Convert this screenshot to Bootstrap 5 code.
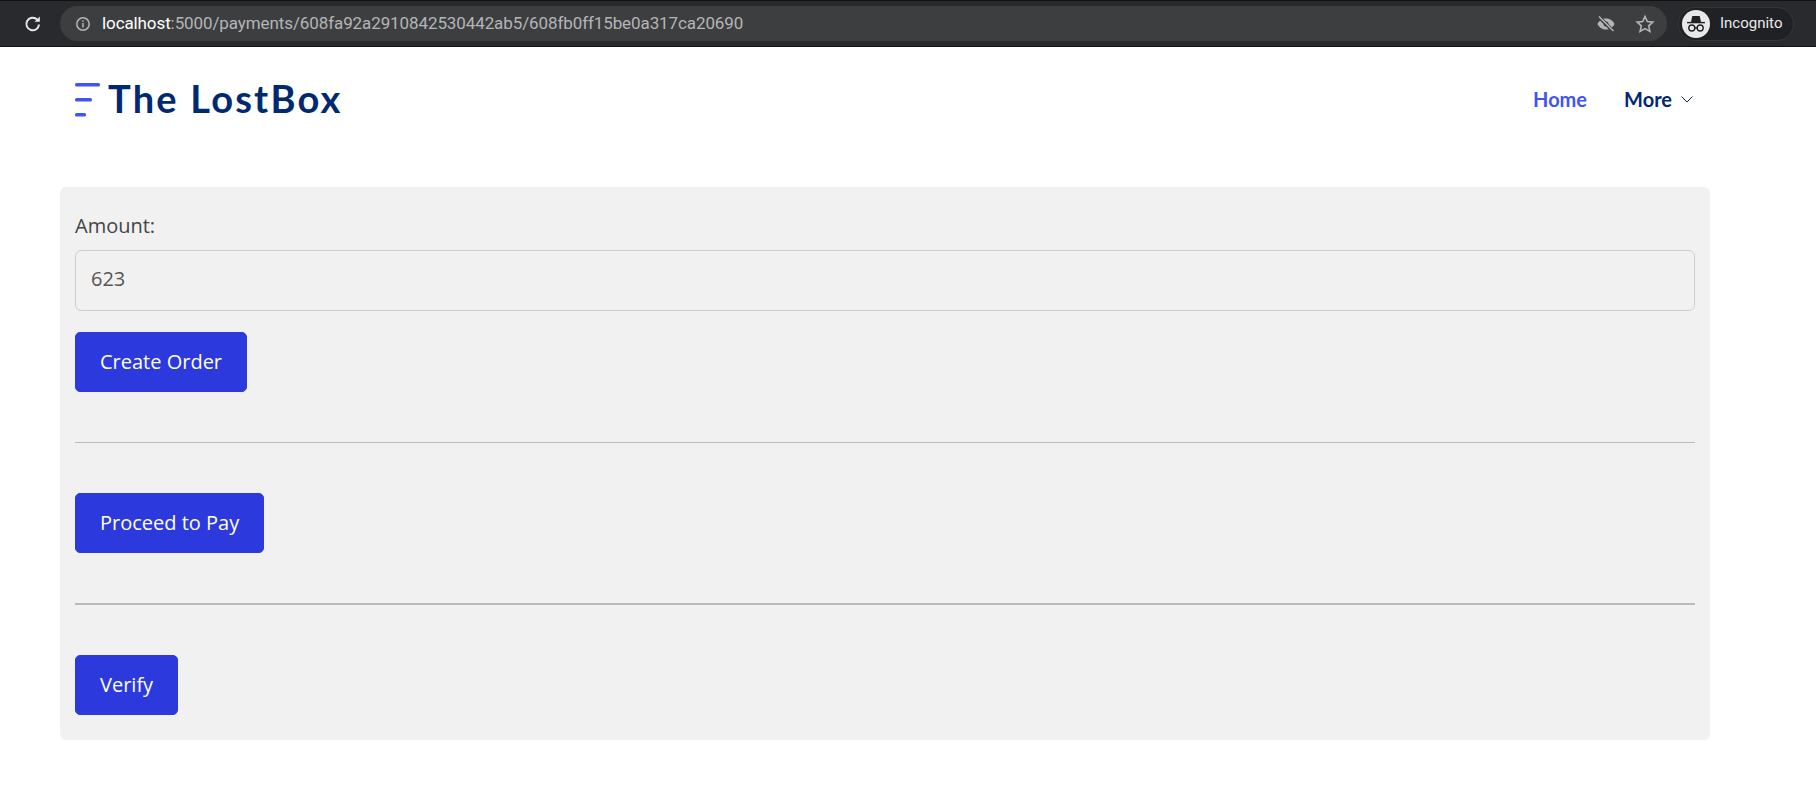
<!DOCTYPE html>
<html lang="en">
<head>
  <meta charset="UTF-8" />
  <title>The LostBox</title>
  <link href="https://cdn.jsdelivr.net/npm/bootstrap@5.3.3/dist/css/bootstrap.min.css" rel="stylesheet"/>
  <style>
    body {
      background: #fff;
      font-family: 'Open Sans', sans-serif;
      overflow: hidden;
    }

    .chrome-bar {
      height: 47px;
      background: #292a2d;
      border-top: 1px solid #111;
      border-bottom: 1px solid #111;
      padding-left: 23px;
    }

    .url-box {
      height: 35px;
      margin-left: 17px;
      width: 1607px;
      background: #3d3e40;
      border-radius: 18px;
      padding: 0 12px 0 15px;
      font-family: 'Roboto', sans-serif;
      font-size: 17px;
      letter-spacing: -0.1px;
      color: #b4b5b7;
    }

    .info-icon {
      margin-right: 11px;
    }

    .url-host {
      color: #fff;
    }

    .star-icon {
      margin-left: 19px;
    }

    .profile-pill {
      height: 34px;
      width: 116px;
      margin-left: 11px;
      background: #202124;
      border: 1px solid #36373a;
      border-radius: 17px;
      padding-left: 3px;
      font-family: 'Roboto', sans-serif;
      font-size: 15px;
      color: #e8eaed;
      flex-shrink: 0;
    }

    .profile-face {
      width: 28px;
      height: 28px;
      margin-right: 10px;
      border-radius: 50%;
      background: #e8e8e8;
    }

    .site-header {
      height: 140px;
      padding: 36px 122px 0 75px;
    }

    .brand-name {
      font-family: 'Lato', sans-serif;
      font-weight: 700;
      font-size: 38px;
      line-height: 30px;
      letter-spacing: 2.2px;
      color: #012970;
      margin-left: 7px;
    }

    .site-nav {
      gap: 37px;
      height: 32px;
    }

    .nav-item-link {
      font-family: 'Lato', sans-serif;
      font-weight: 700;
      font-size: 20px;
      text-decoration: none;
      color: #012970;
    }

    .nav-item-link.active-link {
      color: #4154f1;
    }

    .payment-panel {
      margin-left: 60px;
      width: 1650px;
      height: 553px;
      background: #f1f1f1;
      border-radius: 6px;
      padding: 24px 15px 0;
    }

    .amount-label {
      font-size: 20px;
      color: #444;
      line-height: 29px;
      margin-bottom: 10px;
      display: block;
    }

    .amount-input {
      height: 61px;
      margin-bottom: 21px;
      background: #f1f1f1;
      border: 1px solid #cdcdcd;
      border-radius: 6px;
      font-size: 20px;
      color: #555;
      padding: 4px 15px 8px;
    }

    .amount-input:focus {
      background: #f1f1f1;
    }

    .pay-btn {
      display: block;
      height: 60px;
      padding: 0 24px;
      background: #2b39dd;
      border: 1px solid #2b39dd;
      border-radius: 5px;
      font-size: 20px;
      color: #fff;
    }

    .pay-btn:hover {
      background: #2430c0;
      color: #fff;
    }

    .panel-rule {
      margin: 50px 0;
      border-top: 1px solid #bbb;
      opacity: 1;
    }

    .panel-rule.thick-rule {
      border-top-width: 2px;
    }
  </style>
</head>
<body>
  <div class="chrome-bar d-flex align-items-center">
    <svg width="20" height="20" viewBox="0 0 20 20" fill="none" stroke="#e8eaed" stroke-width="2">
      <path d="M16 10.5a6.3 6.3 0 1 1-1.9-5"/>
      <path d="M16.8 2.5v5.2h-5.2z" fill="#e8eaed" stroke="none"/>
    </svg>
    <div class="url-box d-flex align-items-center">
      <svg class="info-icon" width="16" height="16" viewBox="0 0 16 16" fill="none" stroke="#b4b5b7" stroke-width="1.5">
        <circle cx="8" cy="8" r="6.2"/>
        <path d="M8 7v4.5M8 4.2v1.6"/>
      </svg>
      <span><span class="url-host">localhost</span>:5000/payments/608fa92a2910842530442ab5/608fb0ff15be0a317ca20690</span>
      <svg class="ms-auto" width="20" height="20" viewBox="0 0 20 20">
        <path d="M1.5 10C3.5 6 6.5 4.5 10 4.5s6.500 1.500 8.500 5.500c-2 4-5 5.500-8.500 5.500S3.500 14 1.500 10z" fill="#b4b5b7"/>
        <circle cx="10" cy="10" r="2.500" fill="#3d3e40"/>
        <path d="M3 3l14 14" stroke="#3d3e40" stroke-width="3.500"/>
        <path d="M3 2.500l14.500 14.500" stroke="#b4b5b7" stroke-width="1.500"/>
      </svg>
      <svg class="star-icon" width="20" height="20" viewBox="0 0 20 20" fill="none" stroke="#b4b5b7" stroke-width="1.600">
        <path d="M10 2.500l2.300 5.100 5.500.6-4.100 3.700 1.200 5.500-4.900-2.800-4.900 2.800 1.200-5.500-4.100-3.700 5.500-.6z"/>
      </svg>
    </div>
    <div class="profile-pill d-flex align-items-center">
      <div class="profile-face d-flex align-items-center justify-content-center flex-shrink-0">
        <svg width="22" height="20" viewBox="0 0 22 20">
          <path d="M6 8l1.300-6h7.400L16 8z" fill="#202124"/>
          <path d="M2 8.600h18" stroke="#202124" stroke-width="1.400"/>
          <circle cx="6.800" cy="14" r="3" fill="none" stroke="#202124" stroke-width="1.400"/>
          <circle cx="15.200" cy="14" r="3" fill="none" stroke="#202124" stroke-width="1.400"/>
          <path d="M9.800 14h2.400" stroke="#202124" stroke-width="1.400"/>
        </svg>
      </div>
      <span>Incognito</span>
    </div>
  </div>

  <header class="site-header d-flex align-items-start justify-content-between">
    <a class="d-flex align-items-start text-decoration-none" href="#">
      <svg width="26" height="34" viewBox="0 0 26 34" fill="#4154f1">
        <rect x="0" y="0" width="25" height="3.500" rx="1.500"/>
        <rect x="0" y="15" width="17" height="3.500" rx="1.500"/>
        <rect x="0" y="30" width="11" height="3.500" rx="1.500"/>
      </svg>
      <span class="brand-name">The LostBox</span>
    </a>
    <nav class="site-nav d-flex align-items-center">
      <a class="nav-item-link active-link" href="#">Home</a>
      <a class="nav-item-link d-flex align-items-center" href="#">More
        <svg class="ms-2" width="14" height="10" viewBox="0 0 14 10" fill="none" stroke="#012970" stroke-width="1">
          <path d="M1.500 2.500L7 8l5.500-5.500"/>
        </svg>
      </a>
    </nav>
  </header>

  <main class="payment-panel">
    <form onsubmit="event.preventDefault();">
      <label class="amount-label" for="amount">Amount:</label>
      <input id="amount" class="form-control amount-input" type="text" value="623"/>
      <button class="btn pay-btn">Create Order</button>
      <hr class="panel-rule"/>
      <button class="btn pay-btn">Proceed to Pay</button>
      <hr class="panel-rule thick-rule"/>
      <button class="btn pay-btn">Verify</button>
    </form>
  </main>

  <script src="https://cdn.jsdelivr.net/npm/bootstrap@5.3.3/dist/js/bootstrap.bundle.min.js"></script>
</body>
</html>
